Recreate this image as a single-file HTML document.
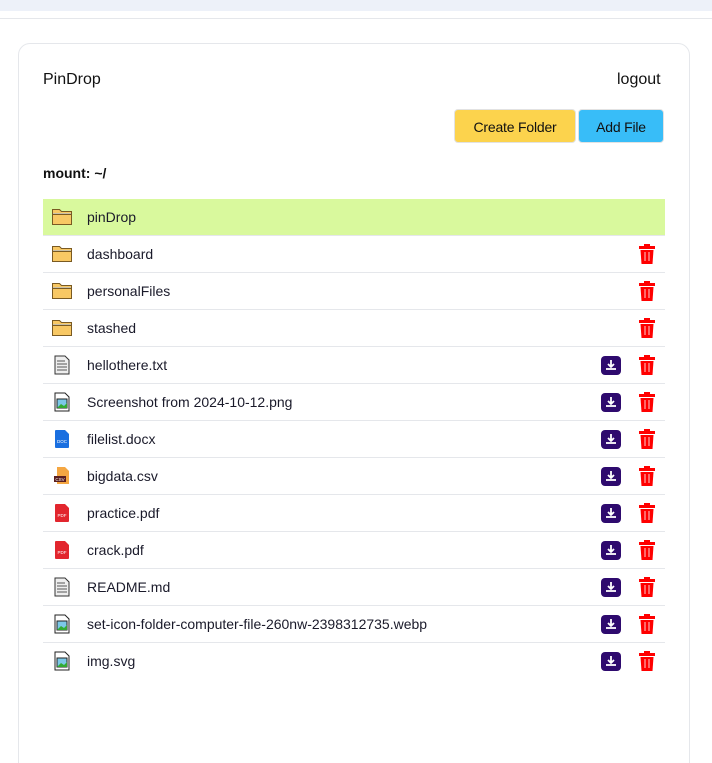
<!DOCTYPE html>
<html><head><style>
html,body{margin:0;width:712px;height:763px;overflow:hidden}
body{background:#fff;font-family:"Liberation Sans",sans-serif;color:#111;position:relative}
.top{position:absolute;left:0;top:0;width:712px;height:11px;background:#edf1f9}
.line{position:absolute;left:0;top:18px;width:712px;height:1px;background:#e5e7eb}
.card{position:absolute;left:18px;top:43px;width:670px;height:730px;border:1px solid #e5e7eb;border-radius:12px}
.t{position:absolute;font-size:16px}
.btn{position:absolute;top:109px;height:34px;border-radius:4px;font-size:14px;line-height:34px;text-align:center;border:1px solid #e2e2e2;box-sizing:border-box;letter-spacing:-0.2px}
.row{position:absolute;left:43px;width:622px;height:37px;border-bottom:1px solid #e5e7eb;box-sizing:border-box}
.row span{position:absolute;left:44px;top:10px;font-size:14px;color:#1a1a2a}
.ic{position:absolute;left:9px;top:8px}
.dl{position:absolute;left:558px;top:9px;width:20px;height:19px;background:#2e0a6e;border-radius:4px}
.tr{position:absolute;left:595px;top:8px}
</style></head><body>
<div class="top"></div><div class="line"></div>
<div class="card"></div>
<div class="t" style="left:43px;top:71px">PinDrop</div>
<div class="t" style="left:617px;top:71px">logout</div>
<div class="btn" style="left:454px;width:122px;background:#fcd34d">Create Folder</div>
<div class="btn" style="left:578px;width:86px;background:#38bdf8">Add File</div>
<div class="t" style="left:43px;top:165px;font-size:14px;font-weight:bold">mount: ~/</div>
<svg width="0" height="0" style="position:absolute">
<defs>
<symbol id="fo" viewBox="0 0 20 18"><path d="M0.5 2.5h7l2 2h10v13H0.5z" fill="#f8c864" stroke="#7a5a22"/><path d="M1 6.5h18" stroke="#c9c0a8" fill="none"/><path d="M0.5 7.5h19" stroke="#7a5a22" fill="none"/></symbol>
<symbol id="txt" viewBox="0 0 20 20"><path d="M3 1h10l4 4v14H3z" fill="#eee" stroke="#333"/><path d="M5 6h8M5 9h10M5 12h10M5 15h10" stroke="#555"/></symbol>
<symbol id="img" viewBox="0 0 20 20"><path d="M3 1h10l4 4v14H3z" fill="#fff" stroke="#222"/><rect x="5" y="7" width="10" height="9" fill="#7cc8e8" stroke="#222"/><path d="M5 16l4-4 3 2 3-3v5z" fill="#3a3"/></symbol>
<symbol id="doc" viewBox="0 0 20 20"><path d="M4 1h9l4 4v13a1 1 0 0 1-1 1H4a1 1 0 0 1-1-1V2a1 1 0 0 1 1-1z" fill="#1a6fe0"/><text x="10" y="14" font-size="4.5" fill="#fff" text-anchor="middle" font-family="Liberation Sans">DOC</text></symbol>
<symbol id="csv" viewBox="0 0 20 20"><path d="M5 1h8l4 4v13H5z" fill="#f5a742"/><rect x="2" y="10" width="12" height="6" fill="#5a1e1e"/><text x="8" y="15" font-size="4.5" fill="#fff" text-anchor="middle" font-family="Liberation Sans">CSV</text></symbol>
<symbol id="pdf" viewBox="0 0 20 20"><path d="M4 1h9l4 4v13a1 1 0 0 1-1 1H4a1 1 0 0 1-1-1V2a1 1 0 0 1 1-1z" fill="#e2262e"/><text x="10" y="14" font-size="4.5" fill="#fff" text-anchor="middle" font-family="Liberation Sans">PDF</text></symbol>
<symbol id="tr" viewBox="0 0 18 20"><rect x="6" y="0" width="6" height="2" fill="#f00"/><rect x="1" y="2" width="16" height="3" fill="#f00"/><path d="M2.5 6h13l-1 14h-11z" fill="#f00"/><path d="M7 8v9M11 8v9" stroke="#ff8a8a" stroke-width="1.5"/></symbol>
<symbol id="dl" viewBox="0 0 20 19"><path d="M10 4v7M7 8l3 3 3-3" stroke="#fff" stroke-width="1.8" fill="none"/><path d="M5 13h10" stroke="#fff" stroke-width="1.8"/></symbol>
</defs></svg>
<div class="row" style="top:199px;background:#d9f99d"><svg class="ic" width="20" height="18"><use href="#fo"/></svg><span>pinDrop</span></div>
<div class="row" style="top:236px"><svg class="ic" width="20" height="18"><use href="#fo"/></svg><span>dashboard</span><svg class="tr" width="18" height="20"><use href="#tr"/></svg></div>
<div class="row" style="top:273px"><svg class="ic" width="20" height="18"><use href="#fo"/></svg><span>personalFiles</span><svg class="tr" width="18" height="20"><use href="#tr"/></svg></div>
<div class="row" style="top:310px"><svg class="ic" width="20" height="18"><use href="#fo"/></svg><span>stashed</span><svg class="tr" width="18" height="20"><use href="#tr"/></svg></div>
<div class="row" style="top:347px"><svg class="ic" width="20" height="20"><use href="#txt"/></svg><span>hellothere.txt</span><div class="dl"><svg width="20" height="19"><use href="#dl"/></svg></div><svg class="tr" width="18" height="20"><use href="#tr"/></svg></div>
<div class="row" style="top:384px"><svg class="ic" width="20" height="20"><use href="#img"/></svg><span>Screenshot from 2024-10-12.png</span><div class="dl"><svg width="20" height="19"><use href="#dl"/></svg></div><svg class="tr" width="18" height="20"><use href="#tr"/></svg></div>
<div class="row" style="top:421px"><svg class="ic" width="20" height="20"><use href="#doc"/></svg><span>filelist.docx</span><div class="dl"><svg width="20" height="19"><use href="#dl"/></svg></div><svg class="tr" width="18" height="20"><use href="#tr"/></svg></div>
<div class="row" style="top:458px"><svg class="ic" width="20" height="20"><use href="#csv"/></svg><span>bigdata.csv</span><div class="dl"><svg width="20" height="19"><use href="#dl"/></svg></div><svg class="tr" width="18" height="20"><use href="#tr"/></svg></div>
<div class="row" style="top:495px"><svg class="ic" width="20" height="20"><use href="#pdf"/></svg><span>practice.pdf</span><div class="dl"><svg width="20" height="19"><use href="#dl"/></svg></div><svg class="tr" width="18" height="20"><use href="#tr"/></svg></div>
<div class="row" style="top:532px"><svg class="ic" width="20" height="20"><use href="#pdf"/></svg><span>crack.pdf</span><div class="dl"><svg width="20" height="19"><use href="#dl"/></svg></div><svg class="tr" width="18" height="20"><use href="#tr"/></svg></div>
<div class="row" style="top:569px"><svg class="ic" width="20" height="20"><use href="#txt"/></svg><span>README.md</span><div class="dl"><svg width="20" height="19"><use href="#dl"/></svg></div><svg class="tr" width="18" height="20"><use href="#tr"/></svg></div>
<div class="row" style="top:606px"><svg class="ic" width="20" height="20"><use href="#img"/></svg><span>set-icon-folder-computer-file-260nw-2398312735.webp</span><div class="dl"><svg width="20" height="19"><use href="#dl"/></svg></div><svg class="tr" width="18" height="20"><use href="#tr"/></svg></div>
<div class="row" style="top:643px;border-bottom:none"><svg class="ic" width="20" height="20"><use href="#img"/></svg><span>img.svg</span><div class="dl"><svg width="20" height="19"><use href="#dl"/></svg></div><svg class="tr" width="18" height="20"><use href="#tr"/></svg></div>
</body></html>
